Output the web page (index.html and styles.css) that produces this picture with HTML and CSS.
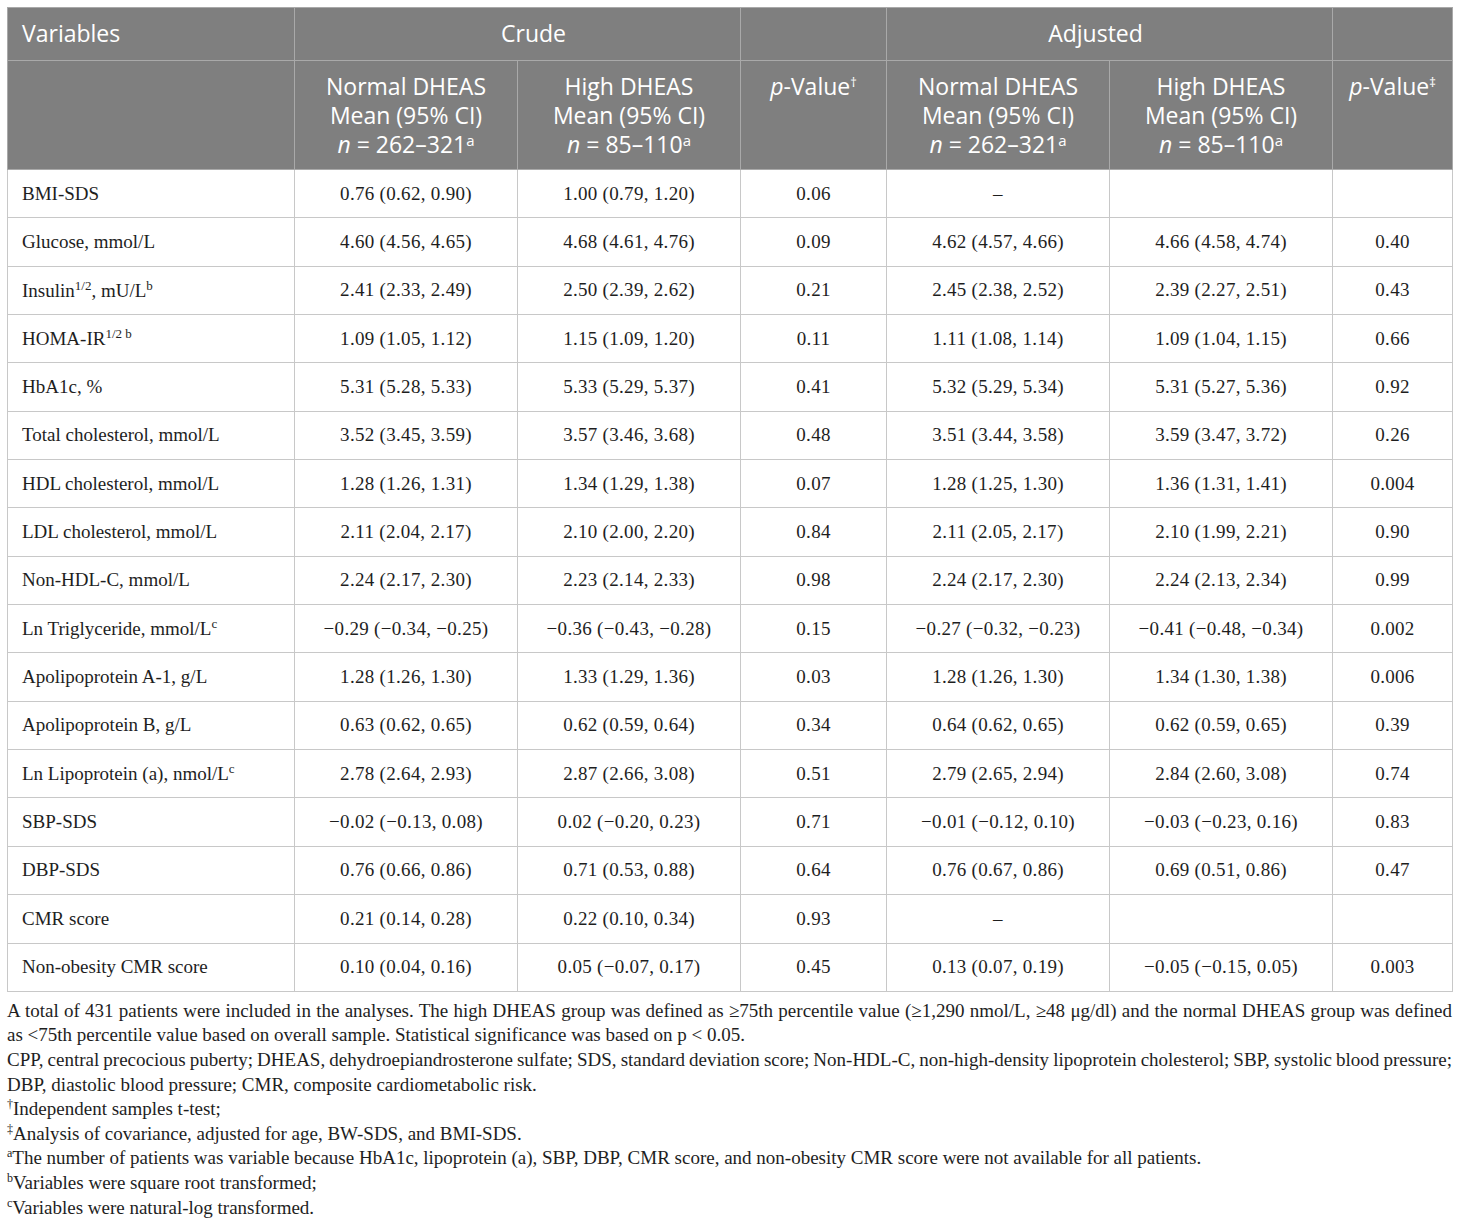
FILE: index.html
```html
<!DOCTYPE html>
<html>
<head>
<meta charset="utf-8">
<link rel="stylesheet" href="styles.css">
</head>
<body>
<div class="page">
<table class="data">
  <colgroup>
    <col class="c-var"><col class="c-mean"><col class="c-mean"><col class="c-p"><col class="c-mean"><col class="c-mean"><col class="c-p2">
  </colgroup>
  <thead>
    <tr class="h1">
      <th class="left">Variables</th>
      <th colspan="2" class="crude">Crude</th>
      <th></th>
      <th colspan="2" class="adjusted">Adjusted</th>
      <th></th>
    </tr>
    <tr class="h2">
      <th></th>
      <th>Normal DHEAS<br>Mean (95% CI)<br><i>n</i> = 262–321<sup>a</sup></th>
      <th>High DHEAS<br>Mean (95% CI)<br><i>n</i> = 85–110<sup>a</sup></th>
      <th><i>p</i>-Value<sup class="dag">†</sup></th>
      <th>Normal DHEAS<br>Mean (95% CI)<br><i>n</i> = 262–321<sup>a</sup></th>
      <th>High DHEAS<br>Mean (95% CI)<br><i>n</i> = 85–110<sup>a</sup></th>
      <th><i>p</i>-Value<sup class="dag">‡</sup></th>
    </tr>
  </thead>
  <tbody>
    <tr><td>BMI-SDS</td><td>0.76 (0.62, 0.90)</td><td>1.00 (0.79, 1.20)</td><td>0.06</td><td>–</td><td></td><td></td></tr>
    <tr><td>Glucose, mmol/L</td><td>4.60 (4.56, 4.65)</td><td>4.68 (4.61, 4.76)</td><td>0.09</td><td>4.62 (4.57, 4.66)</td><td>4.66 (4.58, 4.74)</td><td>0.40</td></tr>
    <tr><td>Insulin<sup>1/2</sup>, mU/L<sup>b</sup></td><td>2.41 (2.33, 2.49)</td><td>2.50 (2.39, 2.62)</td><td>0.21</td><td>2.45 (2.38, 2.52)</td><td>2.39 (2.27, 2.51)</td><td>0.43</td></tr>
    <tr><td>HOMA-IR<sup>1/2 b</sup></td><td>1.09 (1.05, 1.12)</td><td>1.15 (1.09, 1.20)</td><td>0.11</td><td>1.11 (1.08, 1.14)</td><td>1.09 (1.04, 1.15)</td><td>0.66</td></tr>
    <tr><td>HbA1c, %</td><td>5.31 (5.28, 5.33)</td><td>5.33 (5.29, 5.37)</td><td>0.41</td><td>5.32 (5.29, 5.34)</td><td>5.31 (5.27, 5.36)</td><td>0.92</td></tr>
    <tr><td>Total cholesterol, mmol/L</td><td>3.52 (3.45, 3.59)</td><td>3.57 (3.46, 3.68)</td><td>0.48</td><td>3.51 (3.44, 3.58)</td><td>3.59 (3.47, 3.72)</td><td>0.26</td></tr>
    <tr><td>HDL cholesterol, mmol/L</td><td>1.28 (1.26, 1.31)</td><td>1.34 (1.29, 1.38)</td><td>0.07</td><td>1.28 (1.25, 1.30)</td><td>1.36 (1.31, 1.41)</td><td>0.004</td></tr>
    <tr><td>LDL cholesterol, mmol/L</td><td>2.11 (2.04, 2.17)</td><td>2.10 (2.00, 2.20)</td><td>0.84</td><td>2.11 (2.05, 2.17)</td><td>2.10 (1.99, 2.21)</td><td>0.90</td></tr>
    <tr><td>Non-HDL-C, mmol/L</td><td>2.24 (2.17, 2.30)</td><td>2.23 (2.14, 2.33)</td><td>0.98</td><td>2.24 (2.17, 2.30)</td><td>2.24 (2.13, 2.34)</td><td>0.99</td></tr>
    <tr><td>Ln Triglyceride, mmol/L<sup>c</sup></td><td>−0.29 (−0.34, −0.25)</td><td>−0.36 (−0.43, −0.28)</td><td>0.15</td><td>−0.27 (−0.32, −0.23)</td><td>−0.41 (−0.48, −0.34)</td><td>0.002</td></tr>
    <tr><td>Apolipoprotein A-1, g/L</td><td>1.28 (1.26, 1.30)</td><td>1.33 (1.29, 1.36)</td><td>0.03</td><td>1.28 (1.26, 1.30)</td><td>1.34 (1.30, 1.38)</td><td>0.006</td></tr>
    <tr><td>Apolipoprotein B, g/L</td><td>0.63 (0.62, 0.65)</td><td>0.62 (0.59, 0.64)</td><td>0.34</td><td>0.64 (0.62, 0.65)</td><td>0.62 (0.59, 0.65)</td><td>0.39</td></tr>
    <tr><td>Ln Lipoprotein (a), nmol/L<sup>c</sup></td><td>2.78 (2.64, 2.93)</td><td>2.87 (2.66, 3.08)</td><td>0.51</td><td>2.79 (2.65, 2.94)</td><td>2.84 (2.60, 3.08)</td><td>0.74</td></tr>
    <tr><td>SBP-SDS</td><td>−0.02 (−0.13, 0.08)</td><td>0.02 (−0.20, 0.23)</td><td>0.71</td><td>−0.01 (−0.12, 0.10)</td><td>−0.03 (−0.23, 0.16)</td><td>0.83</td></tr>
    <tr><td>DBP-SDS</td><td>0.76 (0.66, 0.86)</td><td>0.71 (0.53, 0.88)</td><td>0.64</td><td>0.76 (0.67, 0.86)</td><td>0.69 (0.51, 0.86)</td><td>0.47</td></tr>
    <tr><td>CMR score</td><td>0.21 (0.14, 0.28)</td><td>0.22 (0.10, 0.34)</td><td>0.93</td><td>–</td><td></td><td></td></tr>
    <tr><td>Non-obesity CMR score</td><td>0.10 (0.04, 0.16)</td><td>0.05 (−0.07, 0.17)</td><td>0.45</td><td>0.13 (0.07, 0.19)</td><td>−0.05 (−0.15, 0.05)</td><td>0.003</td></tr>
  </tbody>
</table>
<div class="notes">
  <p class="note"><span class="jl">A total of 431 patients were included in the analyses. The high DHEAS group was defined as ≥75th percentile value (≥1,290 nmol/L, ≥48 μg/dl) and the normal DHEAS group was defined</span><span class="ln">as &lt;75th percentile value based on overall sample. Statistical significance was based on p &lt; 0.05.</span></p>
  <p class="note"><span class="jl">CPP, central precocious puberty; DHEAS, dehydroepiandrosterone sulfate; SDS, standard deviation score; Non-HDL-C, non-high-density lipoprotein cholesterol; SBP, systolic blood pressure;</span><span class="ln">DBP, diastolic blood pressure; CMR, composite cardiometabolic risk.</span></p>
  <p class="note"><sup>†</sup>Independent samples t-test;</p>
  <p class="note"><sup>‡</sup>Analysis of covariance, adjusted for age, BW-SDS, and BMI-SDS.</p>
  <p class="note"><sup>a</sup>The number of patients was variable because HbA1c, lipoprotein (a), SBP, DBP, CMR score, and non-obesity CMR score were not available for all patients.</p>
  <p class="note"><sup>b</sup>Variables were square root transformed;</p>
  <p class="note"><sup>c</sup>Variables were natural-log transformed.</p>
</div>
</div>
</body>
</html>
```

FILE: styles.css
```css
html, body {
  margin: 0;
  padding: 0;
  background: #ffffff;
}

.page {
  padding: 7px 8px 0 7px;
}

.data {
  border-collapse: collapse;
  width: 1446px;
  table-layout: fixed;
  font-family: "Liberation Serif", "Times New Roman", serif;
  font-size: 19px;
  color: #1e1e1e;
}

.c-var { width: 287px; }
.c-mean { width: 223px; }
.c-p { width: 146px; }
.c-p2 { width: 120px; }

.data th {
  background: #7f7f7f;
  color: #ffffff;
  font-family: "Open Sans", "Liberation Sans", sans-serif;
  font-weight: normal;
  font-size: 23px;
  line-height: 29px;
  border: 1px solid #a9a9a9;
  text-align: center;
  padding: 0 8px;
}

.data .h1 th {
  height: 51px;
  vertical-align: middle;
  padding-top: 0;
  padding-bottom: 1px;
}

.data .h1 th.crude {
  padding-left: 40px;
}

.data .h1 th.adjusted {
  padding-right: 36px;
}

.data .h2 th {
  height: 109px;
  vertical-align: top;
  padding-top: 11px;
  box-sizing: border-box;
}

.data th.left {
  text-align: left;
  padding-left: 14px;
}

.data th sup {
  font-size: 15px;
  line-height: 1;
  vertical-align: 7px;
}

.data th sup.dag {
  font-size: 13px;
  vertical-align: 8px;
}

.data td {
  border: 1px solid #c8c8c8;
  height: 47.35px;
  padding: 0 8px;
  text-align: center;
  vertical-align: middle;
  line-height: 22px;
  letter-spacing: 0.3px;
}

.data td:first-child {
  text-align: left;
  padding-left: 14px;
  letter-spacing: 0;
}

.data td sup {
  font-size: 13px;
  line-height: 1;
  vertical-align: 7px;
  letter-spacing: 0;
}

.notes {
  font-family: "Liberation Serif", "Times New Roman", serif;
  font-size: 19px;
  line-height: 24.6px;
  color: #1e1e1e;
  padding-top: 7px;
  width: 1445px;
}

.note {
  margin: 0;
}

.note .jl {
  display: block;
  text-align: justify;
  text-align-last: justify;
  white-space: nowrap;
  word-spacing: -2.5px;
}

.note .ln {
  display: block;
}

.note sup {
  font-size: 12px;
  line-height: 1;
  vertical-align: 7px;
}
```
